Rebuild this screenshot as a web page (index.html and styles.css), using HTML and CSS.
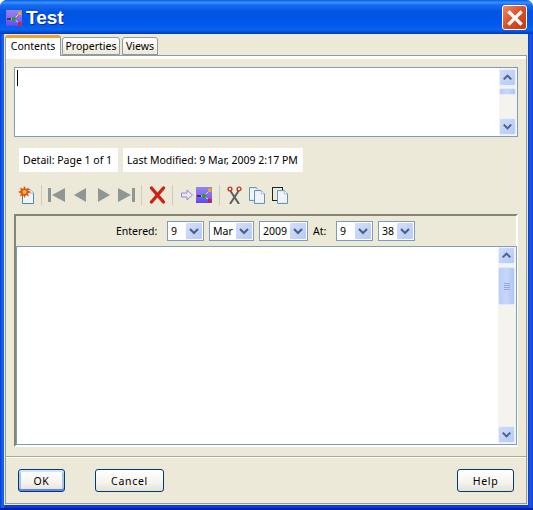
FILE: index.html
```html
<!DOCTYPE html>
<html lang="en">

<head>
  <meta charset="UTF-8">
  <meta name="viewport" content="width=device-width, initial-scale=1.0">
  <title>Test</title>
  <link rel="stylesheet" href="styles.css">
</head>

<body>
  <svg class="defs" width="0" height="0">
    <defs>
      <linearGradient id="appBg" x1="0" y1="0" x2="0" y2="1">
        <stop offset="0" stop-color="#8f86f0"/>
        <stop offset="0.5" stop-color="#8f66f4"/>
        <stop offset="1" stop-color="#5a4af0"/>
      </linearGradient>
      <symbol id="app" viewBox="0 0 16 16">
        <rect width="16" height="16" fill="url(#appBg)"/>
        <path d="M3 9H8L13 4M8 9L13 13" stroke="#e0dcfc" stroke-width="1" fill="none"/>
        <rect x="1" y="8" width="4" height="2" fill="#3a3a50"/>
        <circle cx="8" cy="9" r="2.2" fill="#20a030"/>
        <rect x="12" y="1.500" width="3.500" height="3.500" fill="#d8b020"/>
        <rect x="12" y="12" width="3.500" height="3.500" fill="#d02030"/>
      </symbol>
      <symbol id="down" viewBox="0 0 16 16">
        <path d="M4 6L8 10L12 6" stroke="#4d6185" stroke-width="2.2" fill="none"/>
      </symbol>
      <symbol id="up" viewBox="0 0 16 16">
        <path d="M4 10L8 6L12 10" stroke="#4d6185" stroke-width="2.2" fill="none"/>
      </symbol>
      <symbol id="page" viewBox="0 0 12 15">
        <path d="M.5.5H8L11.5 4V14.5H.5Z" fill="#eef4f8" stroke="#4f88ac"/>
        <path d="M8 .5V4H11.5" fill="#fff" stroke="#9ab8cc"/>
      </symbol>
    </defs>
  </svg>

  <div class="window">
    <div class="titlebar">
      <svg class="app-icon"><use href="#app"/></svg>
      <span class="title">Test</span>
      <div class="close">
        <svg viewBox="0 0 24 24" width="24" height="24">
          <path d="M6.5 6.5L17.5 17.5M17.5 6.5L6.5 17.5" stroke="#fff" stroke-width="3.2" stroke-linecap="square"/>
        </svg>
      </div>
    </div>

    <div class="client">
      <div class="tabs">
        <div class="tab active tab-contents">Contents</div>
        <div class="tab tab-properties">Properties</div>
        <div class="tab tab-views">Views</div>
      </div>

      <div class="tabpanel">
        <div class="textbox top-box">
          <div class="text-area"><span class="caret"></span></div>
          <div class="scroll">
            <div class="sbtn"><svg><use href="#up"/></svg></div>
            <div class="track"><div class="thumb small"></div></div>
            <div class="sbtn"><svg><use href="#down"/></svg></div>
          </div>
        </div>

        <div class="details">
          <div class="detail detail-page">Detail: Page 1 of 1</div>
          <div class="detail detail-modified">Last Modified: 9 Mar, 2009 2:17 PM</div>
        </div>

        <div class="toolbar">
          <div class="tool">
            <svg viewBox="0 0 17 18" width="17" height="18">
              <use href="#page" x="4" y="3" width="12" height="15"/>
              <path d="M6.5 0L8 3L11 1.500L10 4.500L13 6L10 7.500L11 10.500L8 9L6.500 12L5 9L2 10.500L3 7.500L0 6L3 4.500L2 1.500L5 3Z" fill="#e8500f"/>
              <circle cx="6.500" cy="6" r="2" fill="#ffd040"/>
            </svg>
          </div>
          <div class="sep"></div>
          <div class="tool">
            <svg viewBox="0 0 17 14" width="17" height="14"><path d="M0 0H3V14H0ZM17 0V14L4 7Z" fill="#8f9795"/></svg>
          </div>
          <div class="tool">
            <svg viewBox="0 0 12 14" width="12" height="14"><path d="M12 0V14L0 7Z" fill="#8f9795"/></svg>
          </div>
          <div class="tool tool-next">
            <svg viewBox="0 0 12 14" width="12" height="14"><path d="M0 0V14L12 7Z" fill="#8f9795"/></svg>
          </div>
          <div class="tool">
            <svg viewBox="0 0 17 14" width="17" height="14"><path d="M14 0H17V14H14ZM0 0V14L13 7Z" fill="#8f9795"/></svg>
          </div>
          <div class="sep"></div>
          <div class="tool tool-delete">
            <svg viewBox="0 0 17 18" width="17" height="18">
              <path d="M2.500 2L14.500 16M14.500 2L2.500 16" stroke="#d0200f" stroke-width="3.300" stroke-linecap="round"/>
            </svg>
          </div>
          <div class="sep"></div>
          <div class="tool wide">
            <svg viewBox="0 0 12 12" width="12" height="12">
              <path d="M.5 4H6V1L11.500 6L6 11V8H.5Z" fill="none" stroke="#8a8cf0"/>
            </svg>
            <svg class="tool-app"><use href="#app"/></svg>
          </div>
          <div class="sep"></div>
          <div class="tool">
            <svg viewBox="0 0 17 18" width="17" height="18">
              <path d="M4.500 5L13 18M12.500 5L4 18" stroke="#59605e" stroke-width="2"/>
              <circle cx="4" cy="3" r="1.900" fill="none" stroke="#c8342a" stroke-width="1.400"/>
              <circle cx="13" cy="3" r="1.900" fill="none" stroke="#c8342a" stroke-width="1.400"/>
            </svg>
          </div>
          <div class="tool">
            <svg viewBox="0 0 17 17" width="17" height="17">
              <use href="#page" x="0" y="0" width="11" height="14"/>
              <use href="#page" x="5" y="3" width="11" height="14"/>
            </svg>
          </div>
          <div class="tool">
            <svg viewBox="0 0 17 17" width="17" height="17">
              <rect x=".5" y=".5" width="10" height="13" fill="#ece9d8" stroke="#222"/>
              <use href="#page" x="5" y="3" width="11" height="14"/>
            </svg>
          </div>
        </div>

        <div class="group">
          <div class="entered">
            <span class="lbl lbl-entered">Entered:</span>
            <div class="combo w37"><span>9</span><i><svg><use href="#down"/></svg></i></div>
            <div class="combo w45"><span>Mar</span><i><svg><use href="#down"/></svg></i></div>
            <div class="combo w49"><span>2009</span><i><svg><use href="#down"/></svg></i></div>
            <span class="lbl lbl-at">At:</span>
            <div class="combo w37"><span>9</span><i><svg><use href="#down"/></svg></i></div>
            <div class="combo w37"><span>38</span><i><svg><use href="#down"/></svg></i></div>
          </div>
          <div class="textbox low-box">
            <div class="text-area"></div>
            <div class="scroll flush">
              <div class="sbtn"><svg><use href="#up"/></svg></div>
              <div class="track"><div class="thumb big"><b></b><b></b><b></b><b></b></div></div>
              <div class="sbtn"><svg><use href="#down"/></svg></div>
            </div>
          </div>
        </div>

        <div class="divider"></div>

        <div class="buttons">
          <button class="btn default">OK</button>
          <button class="btn cancel">Cancel</button>
          <button class="btn help">Help</button>
        </div>
      </div>
    </div>
  </div>
</body>
</html>
```

FILE: styles.css
```css
* {
  box-sizing: border-box;
}
html, body {
  margin: 0;
  height: 100%;
  background-color: white;
  overflow: hidden;
}
body {
  font-family: "Noto Sans", "Liberation Sans", sans-serif;
  font-size: 10.5px;
  color: black;
}
.defs {
  position: absolute;
}
.window {
  width: 533px;
  height: 510px;
  display: flex;
  flex-direction: column;
  background: linear-gradient(90deg, #0a3bd6, #1a6cf0 3px, #0a3bd6 5px, #0a3bd6 528px, #1a5ce8 531px, #0a3bd6);
  box-shadow: inset 0 -2px 0 #0020a8;
  border-radius: 7px 7px 0 0;
  overflow: hidden;
}
.titlebar {
  height: 34px;
  flex: none;
  display: flex;
  align-items: center;
  padding: 1px 6px 0 6px;
  background: linear-gradient(#0a5ee4, #3a93ff 8%, #1a6cf0 14%, #0054e3 35%, #0058ea 70%, #0a63f0 88%, #0046c8 96%, #003ab8);
}
.app-icon {
  width: 16px;
  height: 16px;
}
.title {
  margin-left: 4px;
  font-family: "Liberation Sans", sans-serif;
  font-size: 19px;
  font-weight: bold;
  color: white;
  text-shadow: 1px 1px 0 #0a2a90;
}
.close {
  margin-left: auto;
  width: 25px;
  height: 25px;
  border: 1px solid #fff;
  border-radius: 3px;
  background: linear-gradient(135deg, #ee8a64, #d8502a 50%, #c23a14);
}
.close svg {
  display: block;
}
.client {
  flex: 1;
  margin: 0 5px 5px 4px;
  padding: 1px 1px 1px 1px;
  background-color: #ece9d8;
  display: flex;
  flex-direction: column;
}
.tabs {
  height: 20px;
  flex: none;
  display: flex;
  align-items: flex-end;
  gap: 1px;
  position: relative;
  z-index: 1;
}
.tab {
  height: 18px;
  display: flex;
  align-items: center;
  justify-content: center;
  border: 1px solid #919b9c;
  border-radius: 3px 3px 0 0;
  background: linear-gradient(#fff, #ece9d8);
}
.tab.active {
  height: 21px;
  margin-bottom: -1px;
  padding-bottom: 2px;
  border-top: 3px solid #f0a030;
  border-bottom: none;
  background: white;
}
.tab-contents {
  width: 56px;
}
.tab-properties {
  width: 58px;
}
.tab-views {
  width: 36px;
  margin-left: 1px;
}
.tabpanel {
  flex: 1;
  border: 1px solid #919b9c;
  padding: 11px 8px 0 8px;
  background: linear-gradient(#fff 3px, #ece9d8 3px);
  display: flex;
  flex-direction: column;
}
.textbox {
  display: flex;
  border: 1px solid #7f9db9;
  background-color: white;
  flex: none;
}
.top-box {
  height: 70px;
}
.text-area {
  flex: 1;
  padding: 2px;
}
.caret {
  display: block;
  width: 1px;
  height: 16px;
  background-color: black;
}
.scroll {
  width: 18px;
  padding: 1px 1px 1px 0;
  background-color: #f4f3ee;
  display: flex;
  flex-direction: column;
}
.scroll.flush {
  padding-top: 0;
}
.sbtn {
  height: 17px;
  flex: none;
  border: 1px solid #e8f0fc;
  border-radius: 2px;
  background: linear-gradient(135deg, #cfdcfa, #b6caf6);
}
.sbtn svg {
  display: block;
  width: 15px;
  height: 15px;
}
.track {
  flex: 1;
}
.thumb {
  border: 1px solid #e0eafa;
  border-radius: 2px;
  background: linear-gradient(90deg, #b8ccf6, #c6d7f9 50%, #b0c5f3);
}
.thumb.small {
  height: 7px;
  margin-top: 2px;
}
.thumb.big {
  height: 38px;
  margin-top: 3px;
  display: flex;
  flex-direction: column;
  justify-content: center;
  align-items: center;
  gap: 1px;
}
.thumb.big b {
  display: block;
  width: 6px;
  height: 1px;
  background-color: #8ea8e0;
}
.details {
  display: flex;
  gap: 5px;
  margin: 11px 0 0 5px;
}
.detail {
  height: 24px;
  padding: 0 4px;
  display: flex;
  align-items: center;
  white-space: nowrap;
  background-color: white;
}
.detail-page {
  width: 99px;
}
.detail-modified {
  width: 180px;
}
.toolbar {
  height: 30px;
  margin-top: 8px;
  padding-left: 1px;
  display: flex;
  align-items: center;
}
.tool {
  width: 23px;
  display: flex;
  justify-content: center;
  align-items: center;
}
.tool svg {
  display: block;
}
.tool-next {
  margin-left: 1px;
}
.tool-delete {
  margin-left: 1px;
}
.tool.wide {
  width: 40px;
  justify-content: flex-start;
  padding-left: 5px;
  gap: 3px;
}
.tool-app {
  width: 16px;
  height: 16px;
}
.sep {
  width: 7px;
  height: 20px;
  flex: none;
  background: linear-gradient(#cfccbc, #cfccbc) center / 1px 100% no-repeat;
}
.group {
  margin-top: 4px;
  height: 233px;
  flex: none;
  border: 2px solid #fff;
  border-top-color: #858574;
  border-left-color: #858574;
  display: flex;
  flex-direction: column;
}
.entered {
  height: 30px;
  flex: none;
  display: flex;
  align-items: center;
  justify-content: center;
  gap: 5px;
  padding-right: 1px;
}
.lbl-entered {
  width: 46px;
}
.lbl-at {
  width: 18px;
}
.combo {
  height: 20px;
  display: flex;
  align-items: center;
  justify-content: space-between;
  padding: 1px 1px 1px 3px;
  background-color: white;
  border: 1px solid #7f9db9;
}
.combo i {
  width: 16px;
  height: 16px;
  border-radius: 1px;
  background: linear-gradient(135deg, #d3e0fb, #b6caf6);
}
.combo svg {
  display: block;
  width: 16px;
  height: 16px;
}
.w37 {
  width: 37px;
}
.w45 {
  width: 45px;
}
.w49 {
  width: 49px;
}
.low-box {
  flex: 1;
  margin-right: -1px;
}
.divider {
  margin-top: 9px;
  height: 2px;
  margin-left: -8px;
  margin-right: -8px;
  flex: none;
  background: linear-gradient(#aca899 1px, #fff 1px);
}
.buttons {
  margin: 11px 4px 0 4px;
  display: flex;
}
.btn {
  height: 23px;
  font-family: inherit;
  font-size: 10.5px;
  letter-spacing: .7px;
  color: black;
  padding: 0;
  border: 1px solid #003c74;
  border-radius: 3px;
  background: linear-gradient(#fff, #f4f3ee 60%, #e4e2d6);
}
.default {
  width: 47px;
  box-shadow: inset 0 -2px 0 #6982ee, inset 0 2px 0 #cee7ff, inset 2px 0 0 #a9c4ef, inset -2px 0 0 #a9c4ef;
}
.cancel {
  width: 69px;
  margin-left: 30px;
}
.help {
  width: 57px;
  margin-left: auto;
}
```
